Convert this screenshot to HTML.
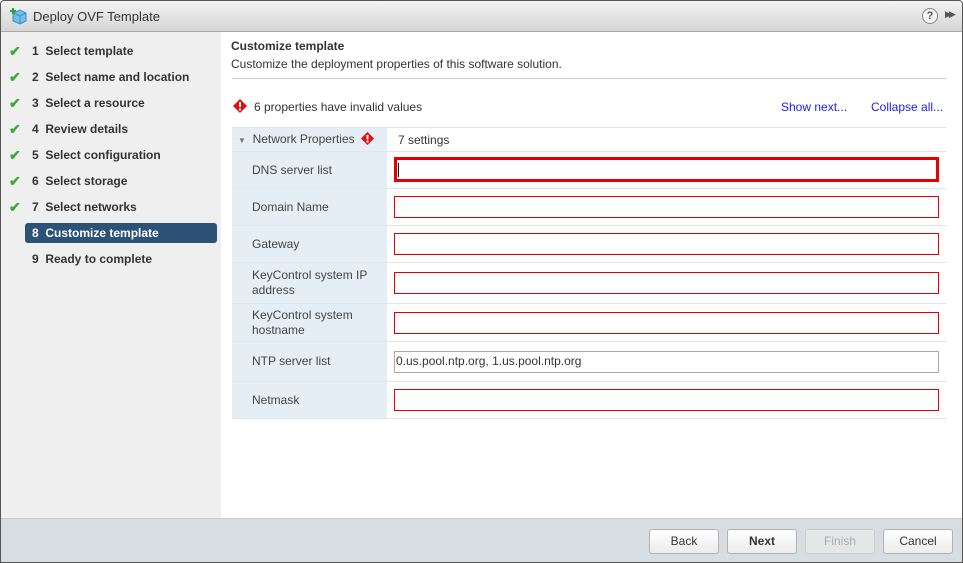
<!DOCTYPE html>
<html><head><style>
*{box-sizing:border-box;margin:0;padding:0}
body{width:963px;height:563px;font-family:"Liberation Sans",Arial,sans-serif;font-size:12px;color:#333;background:#fff;position:relative;overflow:hidden}
.win{position:absolute;left:0;top:0;width:963px;height:563px;border:1px solid #555;border-radius:4px 4px 0 0;overflow:hidden}
.title{position:absolute;left:0;top:0;width:961px;height:31px;background:linear-gradient(#f2f2f2,#d6d6d6);border-bottom:1px solid #aaa}
.title span{position:absolute;left:32px;top:8px;font-size:13px;color:#333}
.left{position:absolute;left:0;top:31px;width:220px;height:486px;background:#efefef}
.step{position:absolute;left:0;height:20px;font-size:12px;font-weight:bold;color:#333;line-height:20px;white-space:nowrap;width:220px}
.chk{position:absolute;left:8px;color:#3fa83a;font-size:14px}
.num{position:absolute;left:31px}
.sel{left:24px;width:192px;background:#2d5277;color:#fff;border-radius:3px}
.foot{position:absolute;left:0;top:517px;width:961px;height:45px;background:#d8dde3;border-top:1px solid #c5cacf}
.btn{position:absolute;top:10px;height:25px;width:70px;border:1px solid #b3b3b3;border-radius:3px;background:linear-gradient(#fff,#ececec);text-align:center;line-height:23px;color:#333}
table{position:absolute;left:231px;top:126px;width:715px;border-collapse:collapse}
td{border-top:1px solid #dfe5ea;border-bottom:1px solid #dfe5ea;vertical-align:middle}
td.l{width:155px;background:#e5eef5;padding-left:20px;color:#444;line-height:15px}
td.v{padding-left:7px}
.in{width:545px;height:22px;border:1px solid #e40000}
</style></head><body><div class="win">
<div class="title">
<svg style="position:absolute;left:9px;top:6px" width="18" height="18"><path d="M3 6l7-3 6 3v8l-6 3-7-3z" fill="#6fc0e8" stroke="#3b8fbf"/><path d="M3 6l7 3 6-3M10 9v8" stroke="#3b8fbf" fill="none"/><path d="M3 1v6M0 4h6" stroke="#2ea33a" stroke-width="2"/></svg>
<span>Deploy OVF Template</span>
<div style="position:absolute;left:921px;top:7px;width:16px;height:16px;border-radius:50%;border:1px solid #888;background:#f5f5f5;text-align:center;font-size:11px;font-weight:bold;line-height:14px;color:#555">?</div>
<div style="position:absolute;left:944px;top:8px;font-size:9px;color:#555;letter-spacing:-3px">▶▶</div>
</div>
<div class="left">
<div class="step" style="top:9px"><span class="chk">✔</span><span class="num">1&nbsp; Select template</span></div>
<div class="step" style="top:35px"><span class="chk">✔</span><span class="num">2&nbsp; Select name and location</span></div>
<div class="step" style="top:61px"><span class="chk">✔</span><span class="num">3&nbsp; Select a resource</span></div>
<div class="step" style="top:87px"><span class="chk">✔</span><span class="num">4&nbsp; Review details</span></div>
<div class="step" style="top:113px"><span class="chk">✔</span><span class="num">5&nbsp; Select configuration</span></div>
<div class="step" style="top:139px"><span class="chk">✔</span><span class="num">6&nbsp; Select storage</span></div>
<div class="step" style="top:165px"><span class="chk">✔</span><span class="num">7&nbsp; Select networks</span></div>
<div class="step sel" style="top:191px"><span style="position:absolute;left:7px">8&nbsp; Customize template</span></div>
<div class="step" style="top:217px"><span class="num">9&nbsp; Ready to complete</span></div>
</div>
<div style="position:absolute;left:230px;top:38px;font-weight:bold;color:#333">Customize template</div>
<div style="position:absolute;left:230px;top:56px;color:#333">Customize the deployment properties of this software solution.</div>
<div style="position:absolute;left:231px;top:77px;width:715px;border-top:1px solid #ccc"></div>
<svg style="position:absolute;left:232px;top:98px" width="14" height="14"><path d="M7 0L14 7 7 14 0 7z" fill="#d11"/><rect x="6" y="3" width="2" height="5" fill="#fff"/><rect x="6" y="9.5" width="2" height="2" fill="#fff"/></svg>
<div style="position:absolute;left:253px;top:99px;color:#333">6 properties have invalid values</div>
<div style="position:absolute;left:780px;top:99px;color:#1a1aff">Show next...</div>
<div style="position:absolute;left:870px;top:99px;color:#1a1aff">Collapse all...</div>
<table>
<tr style="height:24px"><td class="l" style="padding-left:6px"><span style="font-size:8px;color:#777">▼</span>&nbsp; Network Properties <svg width="13" height="13" style="vertical-align:-2px;margin-left:3px"><path d="M6.5 0L13 6.5 6.5 13 0 6.5z" fill="#d11"/><rect x="5.5" y="3" width="2" height="4.5" fill="#fff"/><rect x="5.5" y="8.5" width="2" height="2" fill="#fff"/></svg></td><td class="v" style="padding-left:11px">7 settings</td></tr>
<tr style="height:37px"><td class="l">DNS server list</td><td class="v"><div class="in" style="border:3px solid #e40000;height:25px;margin-top:-1px"><span style="display:block;width:1px;height:14px;background:#000;margin:3px 0 0 1px"></span></div></td></tr>
<tr style="height:37px"><td class="l">Domain Name</td><td class="v"><div class="in"></div></td></tr>
<tr style="height:37px"><td class="l">Gateway</td><td class="v"><div class="in"></div></td></tr>
<tr style="height:41px"><td class="l">KeyControl system IP address</td><td class="v"><div class="in"></div></td></tr>
<tr style="height:38px"><td class="l">KeyControl system hostname</td><td class="v"><div class="in"></div></td></tr>
<tr style="height:40px"><td class="l">NTP server list</td><td class="v"><div class="in" style="border-color:#aaa;padding:2px 0 0 1px">0.us.pool.ntp.org, 1.us.pool.ntp.org</div></td></tr>
<tr style="height:37px"><td class="l">Netmask</td><td class="v"><div class="in"></div></td></tr>
</table>
<div class="foot">
<div class="btn" style="left:648px">Back</div>
<div class="btn" style="left:726px;font-weight:bold">Next</div>
<div class="btn" style="left:804px;color:#aaa;border-color:#ccc;background:#e4e7ea">Finish</div>
<div class="btn" style="left:882px">Cancel</div>
</div>
</div></body></html>
